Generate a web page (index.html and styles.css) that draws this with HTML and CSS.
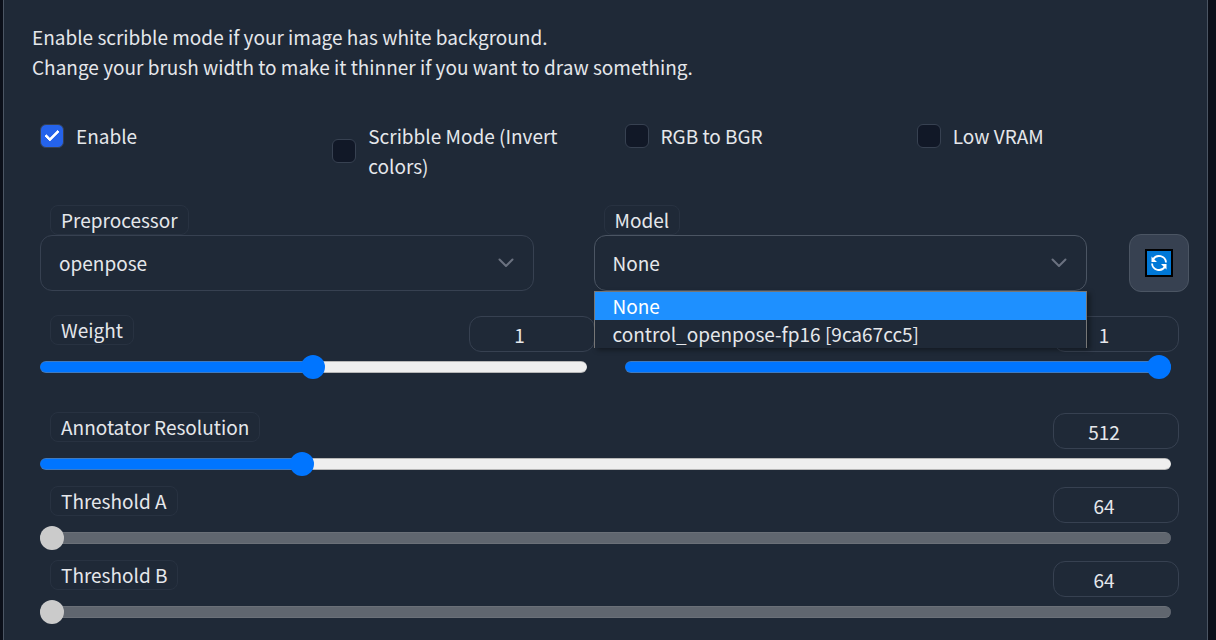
FILE: index.html
```html
<!DOCTYPE html>
<html lang="en">
<head>
<meta charset="utf-8">
<meta name="viewport" content="width=device-width, initial-scale=1">
<title>ControlNet</title>
<link rel="stylesheet" href="styles.css">
</head>
<body>
<main class="panel">
  <p class="intro">Enable scribble mode if your image has white background.<br>Change your brush width to make it thinner if you want to draw something.</p>

  <div class="checks">
    <label class="check"><input type="checkbox" checked><span>Enable</span></label>
    <label class="check"><input type="checkbox"><span>Scribble Mode (Invert colors)</span></label>
    <label class="check"><input type="checkbox"><span>RGB to BGR</span></label>
    <label class="check"><input type="checkbox"><span>Low VRAM</span></label>
  </div>

  <div class="pickers">
    <div class="picker">
      <label class="tag" for="preprocessor">Preprocessor</label>
      <div class="select-wrap">
        <select id="preprocessor" class="select"><option>openpose</option></select>
        <svg class="chevron" viewBox="0 0 16 10" aria-hidden="true"><path d="M1.500 1.500 8 8l6.500-6.500"/></svg>
      </div>
    </div>
    <div class="picker picker-model">
      <label class="tag" for="model">Model</label>
      <div class="select-wrap">
        <select id="model" class="select select-open"><option>None</option><option>control_openpose-fp16 [9ca67cc5]</option></select>
        <svg class="chevron" viewBox="0 0 16 10" aria-hidden="true"><path d="M1.500 1.500 8 8l6.500-6.500"/></svg>
        <ul class="menu" role="listbox" aria-label="Model">
          <li class="option option-active" role="option" aria-selected="true">None</li>
          <li class="option" role="option" aria-selected="false">control_openpose-fp16 [9ca67cc5]</li>
        </ul>
      </div>
    </div>
    <button class="refresh" type="button" aria-label="Refresh models">
      <svg viewBox="0 0 28 28" aria-hidden="true">
        <rect width="28" height="28" fill="#000"/>
        <rect x="2" y="2" width="24" height="24" fill="#0078d7"/>
        <g fill="none" stroke="#fff" stroke-width="1.800">
          <path d="M8 10.500a7 7 0 0 1 13 3"/>
          <path d="M20 17.500a7 7 0 0 1-13-3"/>
        </g>
        <path fill="#fff" d="M6.500 7.500v5.500h5.500zM21.500 20.500v-5.500h-5.500z"/>
      </svg>
    </button>
  </div>

  <div class="pair">
    <div class="field">
      <div class="field-head">
        <label class="tag" for="weight">Weight</label>
        <input class="number" type="number" value="1" aria-label="Weight value">
      </div>
      <input id="weight" class="range" type="range" min="0" max="2" step="0.05" value="1" style="--fill: 50%">
    </div>
    <div class="field">
      <div class="field-head">
        <input class="number" type="number" value="1" aria-label="Guidance value">
      </div>
      <input class="range" type="range" min="0" max="1" step="0.05" value="1" aria-label="Guidance" style="--fill: 100%">
    </div>
  </div>

  <div class="fields">
    <div class="field">
      <div class="field-head">
        <label class="tag" for="resolution">Annotator Resolution</label>
        <input class="number" type="number" value="512" aria-label="Annotator Resolution value">
      </div>
      <input id="resolution" class="range" type="range" min="64" max="2048" value="512" style="--fill: 23%">
    </div>
    <div class="field">
      <div class="field-head">
        <label class="tag" for="threshold-a">Threshold A</label>
        <input class="number" type="number" value="64" disabled aria-label="Threshold A value">
      </div>
      <input id="threshold-a" class="range" type="range" min="64" max="1024" value="64" disabled>
    </div>
    <div class="field">
      <div class="field-head">
        <label class="tag" for="threshold-b">Threshold B</label>
        <input class="number" type="number" value="64" disabled aria-label="Threshold B value">
      </div>
      <input id="threshold-b" class="range" type="range" min="64" max="1024" value="64" disabled>
    </div>
  </div>
</main>
</body>
</html>
```
FILE: styles.css
```css
*, *::before, *::after { box-sizing: border-box; }

body {
  margin: 0;
  padding: 0 8px 0 3px;
  background: #0b0f19;
  color: #e5e7eb;
  font: 19px/30px "Noto Sans CJK SC", "Noto Sans", sans-serif;
}

input, select, button { margin: 0; font: inherit; color: inherit; }

.panel {
  min-height: 100vh;
  padding: 22px 28px 16px 36px;
  border: solid #4b5563;
  border-width: 0 1px;
  background: #1f2937;
}

.intro { margin: 0 0 39px -8px; }

.checks {
  display: grid;
  grid-template-columns: repeat(4, 1fr);
  align-items: start;
  gap: 20px;
  margin-right: -10px;
}

.check { display: flex; align-items: center; gap: 12px; }

.check input {
  flex: none;
  display: grid;
  place-items: center;
  width: 24px;
  height: 24px;
  border: 1px solid #374151;
  border-radius: 6px;
  background: #111827;
  appearance: none;
}

.check input:checked { background: #2563eb; }

.check input:checked::before {
  content: "";
  width: 14px;
  height: 8px;
  margin-bottom: 4px;
  border: solid #fff;
  border-width: 0 0 3px 3px;
  border-radius: 1px;
  transform: rotate(-45deg);
}

.tag {
  display: block;
  width: fit-content;
  height: 30px;
  margin-left: 10px;
  padding: 0 10px;
  border: 1px solid #283241;
  border-radius: 8px;
  line-height: 28px;
}

.pickers {
  display: flex;
  align-items: flex-end;
  margin: 24px -10px 0 0;
}

.picker { flex: 1; }
.picker-model { margin: 0 42px 0 60px; }
.select-wrap { position: relative; }

.select {
  display: block;
  width: 100%;
  height: 56px;
  padding: 0 48px 0 18px;
  border: 1px solid #374151;
  border-radius: 12px;
  background: #1f2937;
  appearance: none;
}

.select-open { border-color: #4b5563; }

.chevron {
  position: absolute;
  top: 23px;
  right: 20px;
  width: 16px;
  height: 10px;
  fill: none;
  stroke: #6b7280;
  stroke-width: 2;
  stroke-linecap: round;
  stroke-linejoin: round;
}

.menu {
  position: absolute;
  z-index: 1;
  top: 100%;
  left: 0;
  right: 0;
  margin: 0;
  padding: 0;
  border: solid #767676;
  border-width: 1px 1px 0;
  background: #1f2937;
  box-shadow: 3px 2px 5px rgba(0, 0, 0, 0.4);
  list-style: none;
}

.option { padding: 0 18px; line-height: 28px; }
.option-active { background: #1e90ff; color: #fff; }

.refresh {
  flex: none;
  display: grid;
  place-items: center;
  width: 60px;
  height: 58px;
  margin-bottom: -1px;
  padding: 0;
  border: 1px solid #4b5563;
  border-radius: 12px;
  background: #374151;
}

.refresh svg { width: 28px; height: 28px; }

.pair {
  display: grid;
  grid-template-columns: 1fr 1fr;
  gap: 30px;
  margin: 24px 0 33px;
}

.fields { display: grid; gap: 10px; }

.field-head {
  display: flex;
  align-items: flex-start;
  justify-content: space-between;
}

.number {
  width: 126px;
  height: 36px;
  margin: 1px 0 0 auto;
  padding: 0 32px 0 8px;
  border: 1px solid #374151;
  border-radius: 12px;
  background: #1f2937;
  text-align: center;
  appearance: textfield;
}

.number::-webkit-inner-spin-button { display: none; }

.range {
  display: block;
  width: calc(100% - 8px);
  height: 24px;
  margin-top: 3px;
  background: none;
  appearance: none;
}

.range::-webkit-slider-runnable-track {
  height: 12px;
  border: 1px solid rgba(128, 128, 128, 0.5);
  border-width: 1px 0;
  border-radius: 6px;
  background: linear-gradient(to right, #0075ff var(--fill, 0%), #efefef var(--fill, 0%));
}

.range::-webkit-slider-thumb {
  width: 24px;
  height: 24px;
  margin-top: -7px;
  border: 0;
  border-radius: 50%;
  background: #0075ff;
  appearance: none;
}

.range:disabled::-webkit-slider-runnable-track { border-color: #6b7078; background: #60666f; }
.range:disabled::-webkit-slider-thumb { background: #cbcbcb; }
```
